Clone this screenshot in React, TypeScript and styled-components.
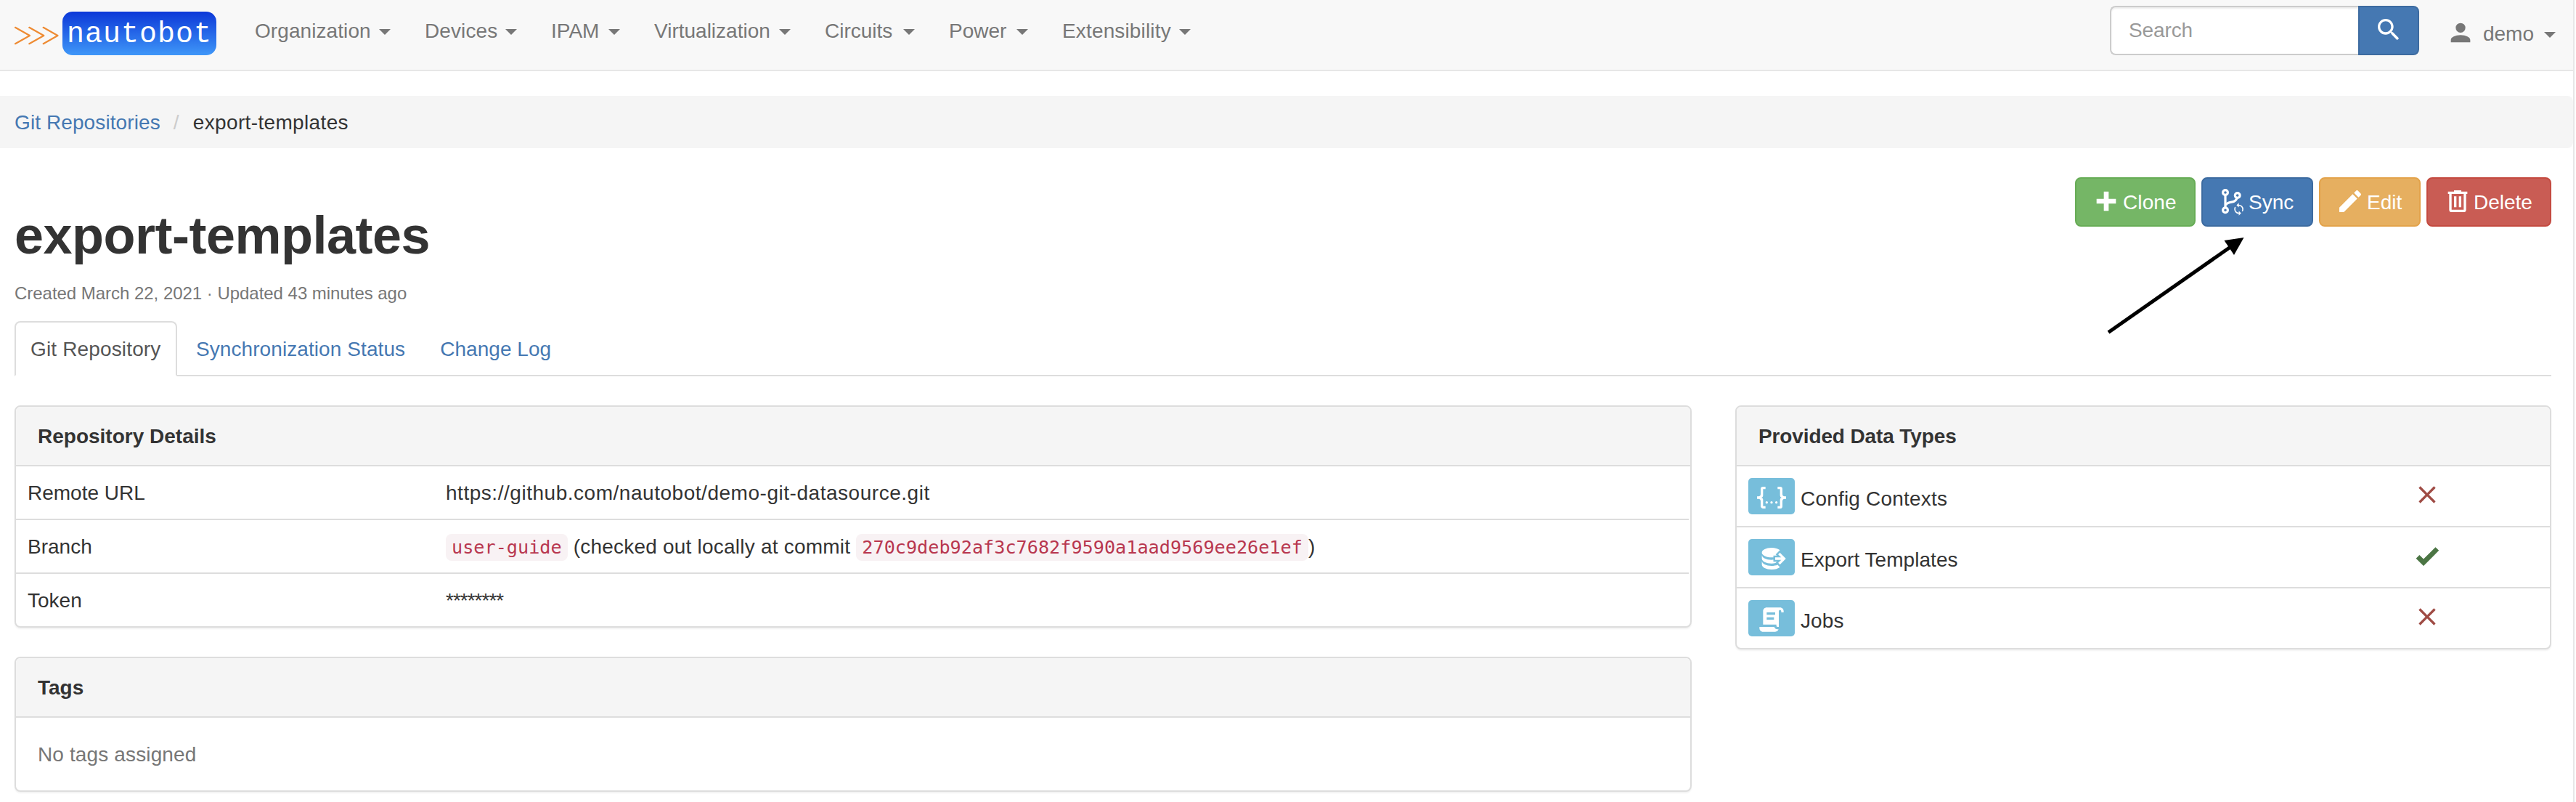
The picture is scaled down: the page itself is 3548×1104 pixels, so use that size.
import React from "react";
import styled, { createGlobalStyle, css } from "styled-components";

const color = {
  text: "#333333",
  muted: "#777777",
  link: "#4578b2",
  border: "#dddddd",
  info: "#77bedb",
};

const GlobalStyle = createGlobalStyle`
  *, *::before, *::after { box-sizing: border-box; }
  html, body { margin: 0; padding: 0; background: #ffffff; }
  body {
    font-family: "Liberation Sans", Arial, Helvetica, sans-serif;
    font-size: 28px;
    line-height: 41px;
    color: ${color.text};
    overflow: hidden;
  }
`;

const Viewport = styled.div`
  position: relative;
  width: 3546px;
  height: 1104px;
  border-right: 2px solid #e7e7e7;
`;

/* ---------- text and icon primitives ---------- */

const Text = styled.span<{ $track?: number }>`
  letter-spacing: ${(p) => p.$track ?? 0}px;
  white-space: pre;
`;

const Svg = styled.svg<{ $ml?: number; $mr?: number; $up?: number }>`
  display: block;
  flex: none;
  width: 40px;
  height: 40px;
  fill: currentColor;
  margin-left: ${(p) => p.$ml ?? 0}px;
  margin-right: ${(p) => p.$mr ?? 0}px;
  margin-bottom: ${(p) => p.$up ?? 0}px;
`;

const paths = {
  magnify:
    "M9.5,3A6.5,6.5 0 0,1 16,9.5C16,11.11 15.41,12.59 14.44,13.73L14.71,14H15.5L20.5,19L19,20.5L14,15.5V14.71L13.73,14.44C12.59,15.41 11.11,16 9.5,16A6.5,6.5 0 0,1 3,9.5A6.5,6.5 0 0,1 9.5,3M9.5,5C7,5 5,7 5,9.5C5,12 7,14 9.5,14C12,14 14,12 14,9.5C14,7 12,5 9.5,5Z",
  account:
    "M12,4A4,4 0 0,1 16,8A4,4 0 0,1 12,12A4,4 0 0,1 8,8A4,4 0 0,1 12,4M12,14C16.42,14 20,15.79 20,18V20H4V18C4,15.79 7.58,14 12,14Z",
  plus: "M20 14H14V20H10V14H4V10H10V4H14V10H20V14Z",
  pencil:
    "M20.71,7.04C21.1,6.65 21.1,6 20.71,5.63L18.37,3.29C18,2.9 17.35,2.9 16.96,3.29L15.12,5.12L18.87,8.87M3,17.25V21H6.75L17.81,9.93L14.06,6.18L3,17.25Z",
  trash:
    "M9,3V4H4V6H5V19A2,2 0 0,0 7,21H17A2,2 0 0,0 19,19V6H20V4H15V3H9M7,6H17V19H7V6M9,8V17H11V8H9M13,8V17H15V8H13Z",
  json: "M5,3H7V5H5V10A2,2 0 0,1 3,12A2,2 0 0,1 5,14V19H7V21H5C3.93,20.73 3,20.1 3,19V15A2,2 0 0,0 1,13H0V11H1A2,2 0 0,0 3,9V5A2,2 0 0,1 5,3M19,3A2,2 0 0,1 21,5V9A2,2 0 0,0 23,11H24V13H23A2,2 0 0,0 21,15V19A2,2 0 0,1 19,21H17V19H19V14A2,2 0 0,1 21,12A2,2 0 0,1 19,10V5H17V3H19M12,15A1,1 0 0,1 13,16A1,1 0 0,1 12,17A1,1 0 0,1 11,16A1,1 0 0,1 12,15M8,15A1,1 0 0,1 9,16A1,1 0 0,1 8,17A1,1 0 0,1 7,16A1,1 0 0,1 8,15M16,15A1,1 0 0,1 17,16A1,1 0 0,1 16,17A1,1 0 0,1 15,16A1,1 0 0,1 16,15Z",
  databaseExport:
    "M12,3C7.58,3 4,4.79 4,7C4,9.21 7.58,11 12,11C12.5,11 13,10.97 13.5,10.92V9.5H16.39L15.39,8.5L18.9,5C17.5,3.8 14.94,3 12,3M18.92,7.08L17.5,8.5L20,11H15V13H20L17.5,15.5L18.92,16.92L23.84,12M4,9V12C4,14.21 7.58,16 12,16C13.17,16 14.26,15.85 15.25,15.63L16.38,14.5H13.5V12.92C13,12.97 12.5,13 12,13C7.58,13 4,11.21 4,9M4,14V17C4,19.21 7.58,21 12,21C14.94,21 17.5,20.2 18.9,19L17,17.1C15.61,17.66 13.9,18 12,18C7.58,18 4,16.21 4,14Z",
  script:
    "M17.8,20C17.4,21.2 16.3,22 15,22H5C3.3,22 2,20.7 2,19V18H5L14.2,18C14.6,19.2 15.7,20 17,20H17.8M19,2C20.7,2 22,3.3 22,5V6H20V5C20,4.4 19.6,4 19,4C18.4,4 18,4.4 18,5V18H17C16.4,18 16,17.6 16,17V16H5V5C5,3.3 6.3,2 8,2H19M8,6V8H15V6H8M8,10V12H14V10H8Z",
  sync: "M12,18A6,6 0 0,1 6,12C6,11 6.25,10.03 6.7,9.2L5.24,7.74C4.46,8.97 4,10.43 4,12A8,8 0 0,0 12,20V23L16,19L12,15M12,4V1L8,5L12,9V6A6,6 0 0,1 18,12C18,13 17.75,13.97 17.3,14.8L18.76,16.26C19.54,15.03 20,13.57 20,12A8,8 0 0,0 12,4Z",
  close:
    "M19,6.41L17.59,5L12,10.59L6.41,5L5,6.41L10.59,12L5,17.59L6.41,19L12,13.41L17.59,19L19,17.59L13.41,12L19,6.41Z",
  check: "M9,20.42L2.79,14.21L5.62,11.38L9,14.77L18.88,4.88L21.71,7.71L9,20.42Z",
};

type IconProps = { name: keyof typeof paths; ml?: number; mr?: number; up?: number };
const Icon = ({ name, ml, mr, up }: IconProps) => (
  <Svg viewBox="0 0 24 24" $ml={ml} $mr={mr} $up={up} aria-hidden="true">
    <path d={paths[name]} />
  </Svg>
);

const BranchSyncIcon = ({ ml, mr }: { ml?: number; mr?: number }) => (
  <Svg viewBox="0 0 40 40" $ml={ml} $mr={mr} aria-hidden="true">
    <g fill="none" stroke="currentColor" strokeWidth="3.2">
      <circle cx="10" cy="8" r="3.4" />
      <circle cx="10" cy="32.2" r="3.4" />
      <circle cx="26.7" cy="12" r="3.4" />
      <path d="M10 11V29" />
      <path d="M26 15.4C25.2 19.6 22.6 20.6 18.6 21.2C14 21.9 11.6 23.2 10.6 25.2" />
    </g>
    <g transform="translate(19.1 21.5) scale(0.79)">
      <path d={paths.sync} />
    </g>
  </Svg>
);

/* ---------- navigation bar ---------- */

const Navbar = styled.header`
  display: flex;
  align-items: flex-start;
  height: 98px;
  padding: 0 24px 0 20px;
  background: #f8f8f8;
  border-bottom: 2px solid #e7e7e7;
  color: ${color.muted};
`;

const Brand = styled.a`
  display: flex;
  width: 278px;
  height: 60px;
  margin: 16px 53px 0 0;
`;

const Chevrons = styled.svg`
  flex: none;
  width: 66px;
  height: 60px;
`;

const Wordmark = styled.span`
  display: flex;
  flex: none;
  justify-content: center;
  width: 212px;
  height: 60px;
  border-radius: 14px;
  background: linear-gradient(#0c38d8, #3f97f8);
  color: #ffffff;
  font-family: "Liberation Mono", "Courier New", monospace;
  font-size: 40px;
  line-height: 64px;
  letter-spacing: 1px;
`;

const Menu = styled.nav`
  display: flex;
  flex: 1;
  padding-top: 22px;
`;

const Caret = styled.i`
  width: 0;
  height: 0;
  border: 8px solid transparent;
  border-top-color: currentColor;
  border-bottom: 0;
  flex: none;
`;

const MenuItem = styled.a<{ $width: number }>`
  display: flex;
  flex: none;
  align-items: center;
  justify-content: space-between;
  width: ${(p) => p.$width}px;
  margin-right: 47px;
  height: 41px;

  & > ${Caret} {
    margin-top: 3px;
  }
`;

const SearchGroup = styled.form`
  display: flex;
  margin: 8px 37px 0 0;
`;

const SearchInput = styled.input`
  width: 342px;
  height: 68px;
  padding: 0 24px;
  border: 2px solid #cccccc;
  border-right: 0;
  border-radius: 8px 0 0 8px;
  background: #ffffff;
  box-shadow: inset 0 2px 2px rgba(0, 0, 0, 0.075);
  font: inherit;
  letter-spacing: -0.1px;
  outline: 0;

  &::placeholder {
    color: #999999;
    opacity: 1;
  }
`;

const SearchButton = styled.button`
  display: flex;
  justify-content: center;
  width: 84px;
  height: 68px;
  padding: 11px 0 0;
  border: 2px solid #3d6ba0;
  border-radius: 0 8px 8px 0;
  background: ${color.link};
  color: #ffffff;
`;

const UserMenu = styled.a`
  display: flex;
  align-items: center;
  height: 41px;
  margin-top: 26px;

  & > ${Caret} {
    margin: 3px 0 0 14px;
  }
`;

/* ---------- page heading ---------- */

const Breadcrumb = styled.nav`
  display: flex;
  margin-top: 34px;
  padding: 16px 20px 15px;
  border-radius: 0 8px 8px 0;
  background: #f5f5f5;
`;

const Anchor = styled.a`
  color: ${color.link};
`;

const Slash = styled.span`
  width: 45px;
  padding-left: 18px;
  color: #cccccc;
`;

const Page = styled.main`
  padding: 0 30px 0 20px;
`;

const Heading = styled.section`
  display: flex;
  justify-content: space-between;
  align-items: flex-start;
  height: 238px;
  padding-top: 40px;
`;

const Title = styled.h1`
  margin: 40px 0 0;
  font-size: 72px;
  line-height: 80px;
  font-weight: 700;
  letter-spacing: -0.5px;
`;

const Meta = styled.p`
  margin: 19px 0 0;
  font-size: 24px;
  line-height: 41px;
  color: ${color.muted};
`;

const Actions = styled.div`
  display: flex;
  gap: 8px;
`;

const tones = {
  success: css`background: #75b666; border-color: #67ac56;`,
  primary: css`background: #4578b2; border-color: #3d6ba0;`,
  warning: css`background: #e6af60; border-color: #e3a34b;`,
  danger: css`background: #c95c54; border-color: #c44a40;`,
};

const ActionButton = styled.button<{ $tone: keyof typeof tones; $width: number }>`
  display: flex;
  align-items: center;
  width: ${(p) => p.$width}px;
  height: 68px;
  padding: 0 0 2px 21px;
  border: 2px solid;
  border-radius: 8px;
  color: #ffffff;
  font: inherit;
  ${(p) => tones[p.$tone]}

  & > ${Text} {
    padding-top: 3px;
  }
`;

const Tabs = styled.div`
  display: flex;
  gap: 4px;
  border-bottom: 2px solid ${color.border};
`;

const Tab = styled.a<{ $active?: boolean }>`
  flex: none;
  height: 76px;
  margin-bottom: -2px;
  padding: 16px 20px 0;
  border: 2px solid transparent;
  border-radius: 8px 8px 0 0;
  color: ${color.link};
  ${(p) =>
    p.$active &&
    css`
      width: 224px;
      color: #555555;
      background: #ffffff;
      border-color: ${color.border} ${color.border} #ffffff;
    `}
`;

/* ---------- panels ---------- */

const Columns = styled.div`
  display: grid;
  grid-template-columns: 2310px 1124px;
  gap: 60px;
  align-items: start;
  padding-top: 40px;
`;

const Stack = styled.div`
  display: grid;
  gap: 40px;
`;

const Panel = styled.section`
  border: 2px solid ${color.border};
  border-radius: 8px;
  background: #ffffff;
  box-shadow: 0 2px 2px rgba(0, 0, 0, 0.05);
  overflow: hidden;
`;

const PanelHeader = styled.h2<{ $track?: number }>`
  margin: 0;
  padding: 20px 30px 19px;
  border-bottom: 2px solid ${color.border};
  background: #f5f5f5;
  font-size: 28px;
  line-height: 41px;
  font-weight: 700;
  letter-spacing: ${(p) => p.$track ?? 0}px;
`;

const PanelBody = styled.div`
  padding: 30px 30px 29px;
  color: ${color.muted};
`;

const DetailRow = styled.div`
  display: grid;
  grid-template-columns: 576px 1fr;
  padding: 16px 16px 15px;
  margin-right: 2px;

  & + & {
    border-top: 2px solid ${color.border};
  }
`;

const Code = styled.code`
  padding: 4px 8px;
  border-radius: 8px;
  background: #f8f2f4;
  color: #b8374f;
  font-family: "DejaVu Sans Mono", Menlo, monospace;
  font-size: 25.2px;
  line-height: 1;
`;

const TypeRow = styled.div`
  display: flex;
  align-items: center;
  height: 82px;
  padding: 0 149px 0 16px;

  & + & {
    height: 84px;
    border-top: 2px solid ${color.border};
  }
`;

const TypeBadge = styled.span`
  display: flex;
  justify-content: center;
  width: 64px;
  height: 50px;
  padding-top: 7px;
  margin-right: 8px;
  border-radius: 5px;
  background: ${color.info};
  color: #ffffff;
`;

const TypeName = styled.span`
  flex: 1;
  padding-top: 7px;
`;

const Status = styled.span<{ $ok: boolean }>`
  color: ${(p) => (p.$ok ? "#4b7544" : "#9f4b44")};
`;

/* Pointer drawn over the page, aimed at the Sync button. */
const Pointer = styled.svg`
  position: absolute;
  left: 2890px;
  top: 316px;
  width: 210px;
  height: 150px;
`;

const menu = [
  { label: "Organization", width: 187, track: 0.08 },
  { label: "Devices", width: 127, track: 0.1 },
  { label: "IPAM", width: 95, track: 0 },
  { label: "Virtualization", width: 188, track: 0 },
  { label: "Circuits", width: 124, track: 0 },
  { label: "Power", width: 109, track: 0 },
  { label: "Extensibility", width: 177, track: 0.15 },
];

const dataTypes: { label: string; icon: keyof typeof paths; ok: boolean; track: number }[] = [
  { label: "Config Contexts", icon: "json", ok: false, track: 0.2 },
  { label: "Export Templates", icon: "databaseExport", ok: true, track: 0.05 },
  { label: "Jobs", icon: "script", ok: false, track: 0.1 },
];

export default function App() {
  return (
    <Viewport>
      <GlobalStyle />
      <Navbar>
        <Brand>
          <Chevrons viewBox="0 0 66 60" aria-hidden="true">
            <path
              d="M1 21.8L21 33L1 44.2M20.3 21.8L40.3 33L20.3 44.2M39.7 21.8L59.5 33L39.7 44.2"
              fill="none"
              stroke="#ee8b33"
              strokeWidth="2.2"
              strokeLinecap="round"
              strokeLinejoin="round"
            />
          </Chevrons>
          <Wordmark>nautobot</Wordmark>
        </Brand>
        <Menu>
          {menu.map((m) => (
            <MenuItem key={m.label} $width={m.width}>
              <Text $track={m.track}>{m.label}</Text>
              <Caret />
            </MenuItem>
          ))}
        </Menu>
        <SearchGroup>
          <SearchInput placeholder="Search" />
          <SearchButton type="button" aria-label="Search">
            <Icon name="magnify" ml={1} />
          </SearchButton>
        </SearchGroup>
        <UserMenu>
          <Icon name="account" mr={11} up={3} />
          <Text>demo</Text>
          <Caret />
        </UserMenu>
      </Navbar>

      <Breadcrumb>
        <Anchor>
          <Text $track={0.1}>Git Repositories</Text>
        </Anchor>
        <Slash>/</Slash>
        <Text $track={0.35}>export-templates</Text>
      </Breadcrumb>

      <Page>
        <Heading>
          <div>
            <Title>export-templates</Title>
            <Meta>
              <Text $track={-0.03}>Created March 22, 2021 · Updated 43 minutes ago</Text>
            </Meta>
          </div>
          <Actions>
            <ActionButton $tone="success" $width={166}>
              <Icon name="plus" mr={3} />
              <Text $track={0.1}>Clone</Text>
            </ActionButton>
            <ActionButton $tone="primary" $width={154}>
              <BranchSyncIcon mr={2} />
              <Text>Sync</Text>
            </ActionButton>
            <ActionButton $tone="warning" $width={140}>
              <Icon name="pencil" mr={3} />
              <Text>Edit</Text>
            </ActionButton>
            <ActionButton $tone="danger" $width={172}>
              <Icon name="trash" mr={2} />
              <Text>Delete</Text>
            </ActionButton>
          </Actions>
        </Heading>

        <Tabs>
          <Tab $active>
            <Text $track={0.15}>Git Repository</Text>
          </Tab>
          <Tab>
            <Text $track={0.08}>Synchronization Status</Text>
          </Tab>
          <Tab>
            <Text $track={0.05}>Change Log</Text>
          </Tab>
        </Tabs>

        <Columns>
          <Stack>
            <Panel>
              <PanelHeader>Repository Details</PanelHeader>
              <DetailRow>
                <Text>Remote URL</Text>
                <Text $track={0.53}>https://github.com/nautobot/demo-git-datasource.git</Text>
              </DetailRow>
              <DetailRow>
                <Text>Branch</Text>
                <div>
                  <Code>user-guide</Code>
                  <Text $track={0.22}> (checked out locally at commit </Text>
                  <Code>270c9deb92af3c7682f9590a1aad9569ee26e1ef</Code>
                  <Text>)</Text>
                </div>
              </DetailRow>
              <DetailRow>
                <Text>Token</Text>
                <Text $track={-1}>********</Text>
              </DetailRow>
            </Panel>
            <Panel>
              <PanelHeader>Tags</PanelHeader>
              <PanelBody>
                <Text $track={0.13}>No tags assigned</Text>
              </PanelBody>
            </Panel>
          </Stack>
          <Panel>
            <PanelHeader $track={-0.12}>Provided Data Types</PanelHeader>
            {dataTypes.map((t) => (
              <TypeRow key={t.label}>
                <TypeBadge>
                  <Icon name={t.icon} />
                </TypeBadge>
                <TypeName>
                  <Text $track={t.track}>{t.label}</Text>
                </TypeName>
                <Status $ok={t.ok}>
                  <Icon name={t.ok ? "check" : "close"} up={4} />
                </Status>
              </TypeRow>
            ))}
          </Panel>
        </Columns>
      </Page>

      <Pointer viewBox="0 0 210 150" aria-hidden="true">
        <path d="M14 141.5L182 24" stroke="#000000" strokeWidth="5" />
        <path d="M200.6 11L173.5 15L187 35Z" />
      </Pointer>
    </Viewport>
  );
}
